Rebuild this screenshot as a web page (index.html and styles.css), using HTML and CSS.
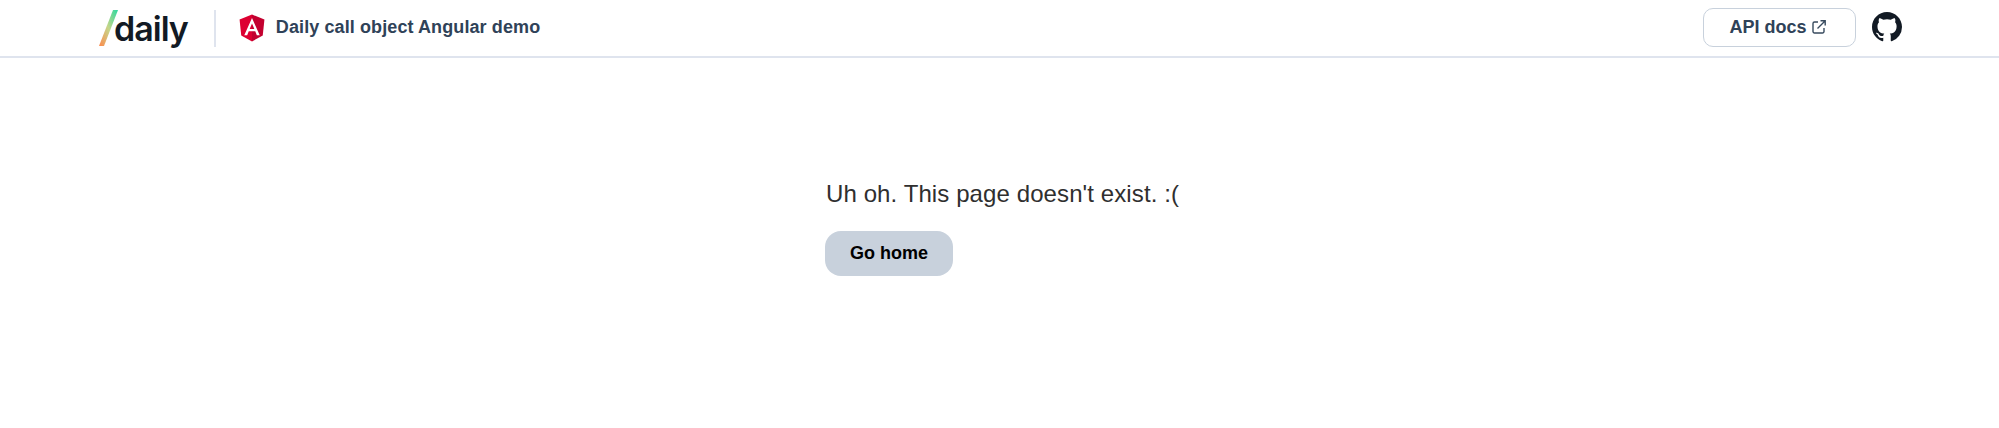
FILE: index.html
```html
<!DOCTYPE html>
<html lang="en">
<head>
    <meta charset="UTF-8">
    <meta name="viewport" content="width=device-width, initial-scale=1.0">
    <title>Daily call object Angular demo</title>
    <link rel="stylesheet" href="styles.css">
</head>
<body>

<header class="header">
    <div class="header-left">
        <a class="logo" href="#">
            <svg class="logo-slash" width="22" height="38" viewBox="0 0 22 38">
                <defs>
                    <linearGradient id="slashGradient" x1="0" y1="1" x2="1" y2="0">
                        <stop offset="0" stop-color="#ff8a4c"/>
                        <stop offset="0.5" stop-color="#c5d68a"/>
                        <stop offset="1" stop-color="#2bd9a0"/>
                    </linearGradient>
                </defs>
                <polygon points="15,1 20,1 6,37 1,37" fill="url(#slashGradient)"/>
            </svg>
            <span class="logo-text">daily</span>
        </a>
        <div class="divider"></div>
        <svg class="angular-icon" width="28" height="30" viewBox="0 0 250 250">
            <polygon points="125,5 125,245 29,192 14,49" fill="#dd0031"/>
            <polygon points="125,5 125,245 221,192 236,49" fill="#c3002f"/>
            <path d="M125 35 L56 190 H82 L96 155 H154 L168 190 H194 Z M146 135 H104 L125 85 Z" fill="#fff"/>
        </svg>
        <span class="title">Daily call object Angular demo</span>
    </div>
    <div class="header-right">
        <a class="docs-btn" href="#">
            API docs
            <svg width="16" height="16" viewBox="0 0 16 16" fill="none" stroke="#374a5e" stroke-width="1.4">
                <path d="M7 3 H3.5 A1.5 1.5 0 0 0 2 4.5 V12.5 A1.5 1.5 0 0 0 3.5 14 H11.5 A1.5 1.5 0 0 0 13 12.5 V9"/>
                <path d="M9.5 1.8 H14.2 V6.5 M14 2 L6.5 9.5"/>
            </svg>
        </a>
        <a class="github" href="#">
            <svg width="30" height="30" viewBox="0 0 16 16" fill="#121a24">
                <path d="M8 0C3.58 0 0 3.58 0 8c0 3.54 2.29 6.53 5.47 7.59.4.07.55-.17.55-.38 0-.19-.01-.82-.01-1.49-2.01.37-2.53-.49-2.69-.94-.09-.23-.48-.94-.82-1.13-.28-.15-.68-.52-.01-.53.63-.01 1.08.58 1.23.82.72 1.21 1.87.87 2.33.66.07-.52.28-.87.51-1.07-1.78-.2-3.64-.89-3.64-3.95 0-.87.31-1.59.82-2.15-.08-.2-.36-1.02.08-2.12 0 0 .67-.21 2.2.82.64-.18 1.32-.27 2-.27s1.36.09 2 .27c1.53-1.04 2.2-.82 2.2-.82.44 1.1.16 1.92.08 2.12.51.56.82 1.27.82 2.15 0 3.07-1.87 3.75-3.65 3.95.29.25.54.73.54 1.48 0 1.07-.01 1.93-.01 2.2 0 .21.15.46.55.38A8.01 8.01 0 0 0 16 8c0-4.42-3.58-8-8-8z"/>
            </svg>
        </a>
    </div>
</header>

<main class="content">
    <p class="message">Uh oh. This page doesn't exist. :(</p>
    <button class="home-btn">Go home</button>
</main>

</body>
</html>
```

FILE: styles.css
```css
body {
    margin: 0;
    font-family: "Liberation Sans", Arial, sans-serif;
    background-color: #fff;
}
.header {
    display: flex;
    justify-content: space-between;
    align-items: center;
    height: 56px;
    padding: 0 97px 0 98px;
    border-bottom: 2px solid #dfe4ee;
}
.header-left,
.header-right {
    display: flex;
    align-items: center;
}
.logo {
    display: flex;
    align-items: center;
    color: #121a24;
    text-decoration: none;
}
.logo-slash {
    margin-right: -6px;
}
.logo-text {
    font-family: Inter, sans-serif;
    font-size: 34px;
    font-weight: 600;
    letter-spacing: -1px;
}
.divider {
    width: 2px;
    height: 37px;
    margin: 0 22px 0 26px;
    background-color: #dfe4ee;
}
.angular-icon {
    margin-right: 10px;
}
.title {
    margin-top: -2px;
    font-size: 18px;
    font-weight: bold;
    letter-spacing: 0.1px;
    color: #2f4258;
}
.docs-btn {
    display: flex;
    align-items: center;
    justify-content: center;
    gap: 4px;
    box-sizing: border-box;
    width: 153px;
    height: 39px;
    margin: -2px 16px 0 0;
    padding-right: 3px;
    border: 1.5px solid #c8d1dc;
    border-radius: 10px;
    font-size: 18px;
    font-weight: bold;
    color: #2f4258;
    text-decoration: none;
}
.github {
    display: flex;
    margin-top: -2px;
}
.content {
    display: flex;
    flex-direction: column;
    align-items: flex-start;
    padding: 120px 0 0 825px;
}
.message {
    margin: 0 0 21px 1px;
    font-size: 24px;
    line-height: 32px;
    letter-spacing: 0.1px;
    color: #2f2f2f;
}
.home-btn {
    width: 128px;
    height: 45px;
    border: none;
    border-radius: 16px;
    background-color: #c8d1dc;
    font-family: inherit;
    font-size: 18px;
    font-weight: bold;
    color: #000;
}
```
